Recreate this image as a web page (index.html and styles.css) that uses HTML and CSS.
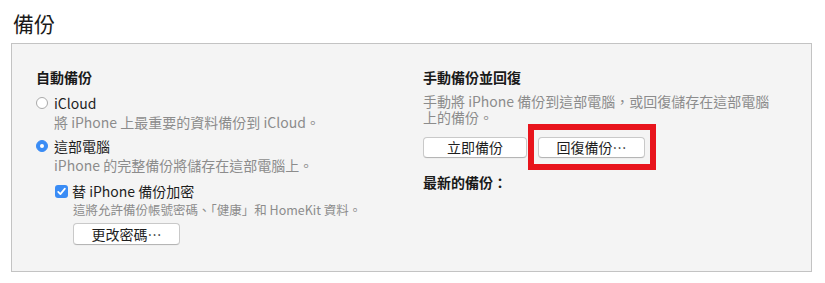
FILE: index.html
```html
<!DOCTYPE html>
<html lang="zh-Hant">
<head>
<meta charset="utf-8">
<title>備份</title>
<link rel="stylesheet" href="styles.css">
</head>
<body>
<h1 class="title">備份</h1>
<div class="panel">
  <div class="col col-left">
    <div class="heading">自動備份</div>
    <div class="option opt-first">
      <span class="radio"></span>
      <span class="label">iCloud</span>
    </div>
    <div class="desc desc-first">將 iPhone 上最重要的資料備份到 iCloud。</div>
    <div class="option opt-second">
      <span class="radio radio-on"></span>
      <span class="label">這部電腦</span>
    </div>
    <div class="desc desc-second">iPhone 的完整備份將儲存在這部電腦上。</div>
    <div class="sub">
      <div class="check-row">
        <span class="checkbox">
          <svg width="13" height="13" viewBox="0 0 13 13"><path d="M3.2 6.8 L5.4 9.1 L9.9 3.6" fill="none" stroke="#fff" stroke-width="1.7" stroke-linecap="round" stroke-linejoin="round"/></svg>
        </span>
        <span class="label">替 iPhone 備份加密</span>
      </div>
      <div class="small">這將允許備份帳號密碼、「健康」和 HomeKit 資料。</div>
      <button class="btn btn-pw">更改密碼⋯</button>
    </div>
  </div>
  <div class="col col-right">
    <div class="heading">手動備份並回復</div>
    <div class="rdesc">手動將 iPhone 備份到這部電腦，或回復儲存在這部電腦上的備份。</div>
    <div class="btn-row">
      <button class="btn btn-now">立即備份</button>
      <span class="highlight"><button class="btn btn-restore">回復備份⋯</button></span>
    </div>
    <div class="heading latest">最新的備份：</div>
  </div>
</div>
</body>
</html>
```

FILE: styles.css
```css
html, body {
  margin: 0;
  padding: 0;
  background: #ffffff;
}
body {
  font-family: "Noto Sans CJK TC", "Noto Sans", sans-serif;
  color: #1e1e1e;
  font-size: 14px;
}
.title {
  margin: 0;
  padding: 9px 0 0 13px;
  height: 28px;
  line-height: 28px;
  font-size: 21px;
  font-weight: 400;
  color: #1a1a1a;
}
.panel {
  margin: 6px 13px 0 11px;
  height: 229px;
  box-sizing: border-box;
  border: 1px solid #c3c3c3;
  background: #f4f4f4;
  display: flex;
  padding: 24px 0 0 24px;
}
.col-left {
  width: 387px;
}
.col-right {
  width: 358px;
}
.heading {
  height: 18px;
  line-height: 18px;
  font-weight: 700;
  color: #1a1a1a;
}
.option {
  display: flex;
  align-items: center;
  height: 18px;
  line-height: 18px;
}
.opt-first { margin-top: 8px; }
.opt-second { margin-top: 6px; }
.radio {
  width: 10px;
  height: 10px;
  border-radius: 50%;
  border: 1px solid #a9a9a9;
  background: #ffffff;
  margin-right: 6px;
  flex: none;
}
.radio-on {
  border-color: #3a8cf5;
  background: #3a8cf5;
  position: relative;
}
.radio-on::after {
  content: "";
  position: absolute;
  left: 3px;
  top: 3px;
  width: 4px;
  height: 4px;
  border-radius: 50%;
  background: #ffffff;
}
.desc {
  padding-left: 18px;
  height: 18px;
  line-height: 18px;
  color: #8c8c8c;
  margin-top: 1px;
}
.sub {
  padding-left: 19px;
}
.check-row {
  display: flex;
  align-items: center;
  margin-top: 8px;
  height: 18px;
  line-height: 18px;
}
.checkbox {
  width: 13px;
  height: 13px;
  border-radius: 3px;
  background: #3a8cf5;
  margin-right: 4px;
  display: flex;
  flex: none;
}
.small {
  margin-top: 2px;
  padding-left: 18px;
  height: 15px;
  line-height: 15px;
  font-size: 12.5px;
  color: #8c8c8c;
}
.btn {
  font-family: inherit;
  font-size: 14px;
  color: #1e1e1e;
  background: #ffffff;
  border: 1px solid #c9c9c9;
  border-bottom-color: #b5b5b5;
  border-radius: 4px;
  height: 21px;
  line-height: 19px;
  padding: 0;
  box-shadow: 0 0.5px 0 rgba(0,0,0,0.05);
}
.btn-pw {
  margin: 6px 0 0 18px;
  width: 107px;
  height: 22px;
}
.rdesc {
  margin-top: 7px;
  line-height: 16px;
  color: #8c8c8c;
}
.btn-row {
  display: flex;
  gap: 11px;
  margin-top: 12px;
}
.btn-now { width: 104px; }
.btn-restore { width: 107px; }
.highlight {
  position: relative;
  display: flex;
}
.highlight::after {
  content: "";
  position: absolute;
  left: -10px;
  right: -11px;
  top: -13px;
  bottom: -12px;
  border: 6px solid #e8141c;
  pointer-events: none;
}
.latest {
  margin-top: 15px;
}
```
